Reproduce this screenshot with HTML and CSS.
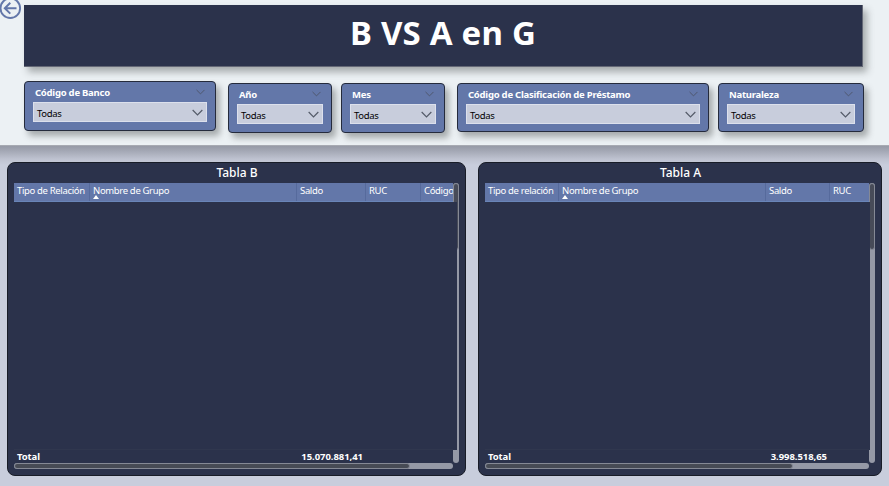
FILE: index.html
```html
<!DOCTYPE html>
<html lang="es">
<head>
<meta charset="utf-8">
<title>B VS A en G</title>
<link rel="stylesheet" href="styles.css">
</head>
<body>
<svg width="0" height="0" class="defs"><symbol id="chev" viewBox="0 0 10 6"><path d="M.6.7 5 5.1 9.4.7" fill="none" stroke="currentColor" stroke-width="1.1"/></symbol></svg>
<header class="top">
  <svg class="back" viewBox="0 0 22 22"><g fill="none" stroke="#6377a9"><circle cx="10.3" cy="8.2" r="9.8" stroke-width="1.9"/><path d="M16.5 8.2H5M10.3 2.8 4.8 8.2 10.3 13.6" stroke-width="2"/></g></svg>
  <h1 class="banner"><span>B VS A en G</span></h1>
  <div class="filters">
    <section class="slicer banco"><div class="label"><span>Código de Banco</span><svg><use href="#chev"/></svg></div><div class="select"><span>Todas</span><svg><use href="#chev"/></svg></div></section>
    <section class="slicer anio"><div class="label"><span>Año</span><svg><use href="#chev"/></svg></div><div class="select"><span>Todas</span><svg><use href="#chev"/></svg></div></section>
    <section class="slicer mes"><div class="label"><span>Mes</span><svg><use href="#chev"/></svg></div><div class="select"><span>Todas</span><svg><use href="#chev"/></svg></div></section>
    <section class="slicer prestamo"><div class="label"><span>Código de Clasificación de Préstamo</span><svg><use href="#chev"/></svg></div><div class="select"><span>Todas</span><svg><use href="#chev"/></svg></div></section>
    <section class="slicer natural"><div class="label"><span>Naturaleza</span><svg><use href="#chev"/></svg></div><div class="select"><span>Todas</span><svg><use href="#chev"/></svg></div></section>
  </div>
</header>
<main class="tables">
  <section class="panel b">
    <h2>Tabla B</h2>
    <div class="grid">
      <div class="head"><span>Tipo de Relación</span><span class="sorted">Nombre de Grupo</span><span>Saldo</span><span>RUC</span><span>Código</span></div>
      <div class="rows"></div>
      <div class="total"><b>Total</b><b></b><b class="sum">15.070.881,41</b></div>
      <div class="vbar"><i></i></div>
      <div class="hbar"><i></i></div>
    </div>
  </section>
  <section class="panel a">
    <h2>Tabla A</h2>
    <div class="grid">
      <div class="head"><span>Tipo de relación</span><span class="sorted">Nombre de Grupo</span><span>Saldo</span><span>RUC</span></div>
      <div class="rows"></div>
      <div class="total"><b>Total</b><b></b><b class="sum">3.998.518,65</b></div>
      <div class="vbar"><i></i></div>
      <div class="hbar"><i></i></div>
    </div>
  </section>
</main>
</body>
</html>
```
FILE: styles.css
```css
* { box-sizing: border-box; }
body { margin: 0; width: 889px; height: 486px; overflow: hidden; background: #c8cddc; font-family: "Noto Sans", "Open Sans", sans-serif; }
.defs { position: absolute; }
.top { position: relative; height: 146px; padding: 5px 25px 0 24px; background: #ecf1f4; border-bottom: 1px solid #a7aab2; }
.back { position: absolute; left: 0; top: 0; width: 22px; height: 22px; }
.banner { margin: 0; width: 839px; height: 62px; display: flex; justify-content: center; background: #2b324b; border: solid #646876; border-width: 0 1px 1px 0; box-shadow: 4px 5px 7px rgba(70,75,75,.42); color: #fff; font-size: 33px; line-height: 56px; font-weight: 700; letter-spacing: .2px; white-space: nowrap; }
.filters { display: flex; align-items: flex-start; margin-top: 14px; }
.slicer { flex: none; height: 49px; margin-top: 2px; padding: 4px 8px 0; background: #6377a9; border: 1px solid #252b3c; border-radius: 4px; box-shadow: 4px 5px 6px rgba(70,75,75,.42); }
.banco { width: 192px; height: 50px; margin-top: 0; }
.anio { width: 104px; height: 50px; margin-left: 12px; }
.mes { width: 104px; height: 50px; margin-left: 9px; }
.prestamo { width: 252px; margin-left: 12px; }
.natural { width: 146px; margin-left: 9px; }
.label { height: 16px; display: flex; justify-content: space-between; padding: 0 2px; color: #fff; font-size: 9.5px; line-height: 13px; font-weight: 700; letter-spacing: -.24px; white-space: nowrap; }
.label svg { width: 9px; height: 6px; margin-top: 3px; color: #4f586e; }
.select { height: 20px; display: flex; justify-content: space-between; padding: 0 3px; background: #c8cddc; border: 1px solid #dce0ec; color: #000; font-size: 9.5px; line-height: 21px; letter-spacing: -.35px; }
.select svg { width: 11px; height: 7px; margin-top: 6px; color: #555b69; }
.tables { height: 340px; display: flex; align-items: flex-start; gap: 12px; padding: 16px 7px 0; background: linear-gradient(#969aa6, #a4a8b5 5px, #bec2d0 13px, #c8cddc 19px); }
.panel { flex: none; height: 314px; padding: 1px 6px 0; background: #2b324b; border: 1px solid #181c27; border-radius: 8px; }
.panel.b { width: 459px; --cols: 76px 207px 69px 55px 32px; }
.panel.a { width: 404px; --cols: 74px 207px 64px 39px; }
.panel h2 { margin: 0; height: 19px; padding-left: 1px; color: #fff; font-size: 12px; line-height: 17px; font-weight: 500; text-align: center; }
.grid { display: grid; grid-template: 19px 247px 14px 6px / 1fr 6px; }
.b .grid { width: 445px; }
.a .grid { width: 390px; grid-template-columns: 384px 6px; }
.head, .total { display: grid; grid-template-columns: var(--cols); grid-column: 1; overflow: hidden; white-space: nowrap; color: #fff; font-size: 9.5px; }
.head { background: #6377a9; border-bottom: 1px solid #6985b8; line-height: 16px; letter-spacing: -.34px; }
.head span { position: relative; padding-left: 3px; border-right: 1px solid #566a9c; overflow: hidden; }
.head span:last-child { border: 0; }
.sorted::after { content: ""; position: absolute; left: 3px; top: 12px; border: solid transparent; border-width: 0 3.5px 4px; border-bottom-color: #fff; }
.rows { grid-column: 1; }
.total { border-top: 1px solid #30374e; line-height: 13px; }
.total b { padding-left: 3px; letter-spacing: -.1px; }
.total .sum { padding: 0 3px 0 0; text-align: right; letter-spacing: -.05px; }
.vbar { grid-area: 1 / 2 / 4 / 3; background: #9599a6; border-radius: 3px; overflow: hidden; }
.vbar i { display: block; height: 67px; background: #474b58; border: 1px solid #858995; border-radius: 3px; }
.b .vbar { clip-path: polygon(0 0, 100% 0, 100% 100%, 0 100%, 0 267px, 4px 267px, 4px 19px, 0 19px); }
.a .vbar { clip-path: polygon(0 0, 100% 0, 100% 100%, 0 100%, 0 267px, 1px 267px, 1px 19px, 0 19px); }
.hbar { grid-area: 4 / 1; background: #9599a6; border-radius: 3px; overflow: hidden; }
.hbar i { display: block; width: 396px; height: 6px; background: #474b55; border: 1px solid #858995; border-radius: 3px; }
.a .hbar i { width: 308px; }
```
